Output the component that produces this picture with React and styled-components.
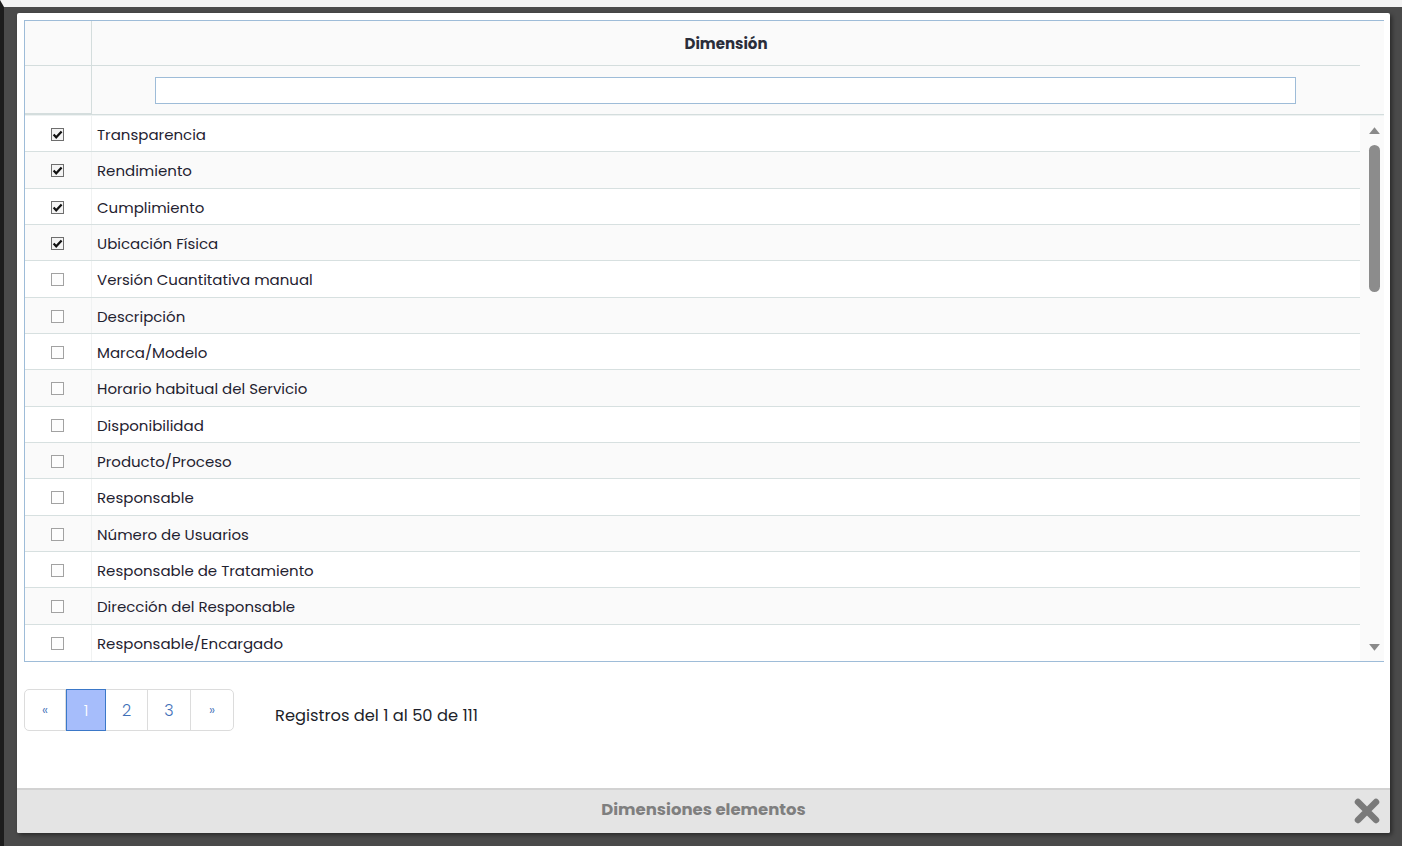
import React, { useState } from 'react'
import styled, { createGlobalStyle } from 'styled-components';

const GlobalStyle = createGlobalStyle`
  html, body { margin: 0; padding: 0; }
  body {
    font-family: "Poppins", "Noto Sans", "Open Sans", sans-serif;
    background: #4a4a4a;
    overflow: hidden;
  }
`;

const dimensiones = [
  { name: 'Transparencia', checked: true },
  { name: 'Rendimiento', checked: true },
  { name: 'Cumplimiento', checked: true },
  { name: 'Ubicación Física', checked: true },
  { name: 'Versión Cuantitativa manual', checked: false },
  { name: 'Descripción', checked: false },
  { name: 'Marca/Modelo', checked: false },
  { name: 'Horario habitual del Servicio', checked: false },
  { name: 'Disponibilidad', checked: false },
  { name: 'Producto/Proceso', checked: false },
  { name: 'Responsable', checked: false },
  { name: 'Número de Usuarios', checked: false },
  { name: 'Responsable de Tratamiento', checked: false },
  { name: 'Dirección del Responsable', checked: false },
  { name: 'Responsable/Encargado', checked: false },
];

export default function App() {
  const [list, setList] = useState(dimensiones);
  const [filtro, setFiltro] = useState('');

  const toggle = (index) => {
    setList(list.map((d, i) => (i === index ? { ...d, checked: !d.checked } : d)));
  };

  const shown = list.filter((d) =>
    d.name.toLowerCase().includes(filtro.toLowerCase().trim())
  );

  return (
    <>
      <GlobalStyle />
      <Page>
        <Dialog>
          <Content>
            <Table>
              <HeadRow>
                <HeadCheckCell />
                <HeadCell>Dimensión</HeadCell>
                <Gutter />
              </HeadRow>
              <FilterRow>
                <HeadCheckCell />
                <FilterCell>
                  <FilterInput value={filtro} onChange={(e) => setFiltro(e.target.value)} />
                </FilterCell>
                <Gutter />
              </FilterRow>
              <Body>
                <Rows>
                  {shown.map((d, i) => (
                    <Row key={d.name} $alt={i % 2 === 1} onClick={() => toggle(list.indexOf(d))}>
                      <CheckCell>
                        <Check $on={d.checked}>
                          {d.checked && (
                            <svg width="11" height="11" viewBox="0 0 11 11">
                              <path d="M1.6 5.6 L4.2 8.3 L9.6 2.4" fill="none" stroke="#111" strokeWidth="2.2" />
                            </svg>
                          )}
                        </Check>
                      </CheckCell>
                      <NameCell>{d.name}</NameCell>
                    </Row>
                  ))}
                </Rows>
                <ScrollTrack>
                  <Arrow viewBox="0 0 14 10"><path d="M1 9 L7 1.5 L13 9 Z" fill="#8a8a8a" /></Arrow>
                  <Thumb />
                  <Spacer />
                  <Arrow viewBox="0 0 14 10"><path d="M1 1 L7 8.5 L13 1 Z" fill="#8a8a8a" /></Arrow>
                </ScrollTrack>
              </Body>
            </Table>

            <PagerBar>
              <Pager>
                <PageItem $w={41} $small>«</PageItem>
                <PageItem $w={40} $active>1</PageItem>
                <PageItem $w={42}>2</PageItem>
                <PageItem $w={43}>3</PageItem>
                <PageItem $w={42} $small $last>»</PageItem>
              </Pager>
              <Records>Registros del 1 al 50 de 111</Records>
            </PagerBar>
          </Content>

          <Footer>
            <FooterTitle>Dimensiones elementos</FooterTitle>
            <CloseButton aria-label="Cerrar">
              <svg width="26" height="26" viewBox="0 0 26 26">
                <path d="M4 4 L22 22 M22 4 L4 22" stroke="#7a7a7a" strokeWidth="6.5" strokeLinecap="round" />
              </svg>
            </CloseButton>
          </Footer>
        </Dialog>
      </Page>
    </>
  )
}

const Page = styled.div`
  width: 1402px;
  height: 846px;
  box-sizing: border-box;
  border-top: 7px solid #f3f3f3;
  border-left: 4px solid #1c1c1c;
  background: #4a4a4a;
  padding: 6px 0 0 13px;
`;

const Dialog = styled.div`
  width: 1373px;
  height: 820px;
  background: #fff;
  border-radius: 2px;
  box-shadow: 2px 2px 4px rgba(0, 0, 0, 0.45);
  display: flex;
  flex-direction: column;
  overflow: hidden;
`;

const Content = styled.div`
  flex: 1;
  padding: 7px 6px 0 7px;
`;

const Table = styled.div`
  border-top: 1px solid #9ebcd8;
  border-left: 1px solid #9ebcd8;
  border-bottom: 1px solid #9ebcd8;
`;

const HeadRow = styled.div`
  display: flex;
  height: 45px;
  background: #fafafa;
`;

const FilterRow = styled(HeadRow)`
  height: 48px;
  border-bottom: 1px solid #d4dddd;
`;

const HeadCheckCell = styled.div`
  width: 66px;
  border-right: 1px solid #d4dddd;
  border-bottom: 1px solid #d4dddd;
`;

const HeadCell = styled.div`
  flex: 1;
  display: flex;
  align-items: center;
  justify-content: center;
  padding-top: 1px;
  font-size: 15px;
  font-weight: 700;
  color: #2a2d3a;
  border-bottom: 1px solid #d4dddd;
`;

const FilterCell = styled.div`
  flex: 1;
  display: flex;
  align-items: center;
  justify-content: center;
  padding-left: 1px;
`;

const FilterInput = styled.input`
  width: 1141px;
  height: 27px;
  box-sizing: border-box;
  border: 1px solid #9ebcd8;
  background: #fff;
  outline: none;
  font: inherit;
  font-size: 14px;
  padding: 0 6px;
  margin-right: 3px;
`;

const Gutter = styled.div`
  width: 24px;
`;

const Body = styled.div`
  display: flex;
  height: 546px;
  box-sizing: border-box;
  border-top: 1px solid #eef2f2;
`;

const Rows = styled.div`
  flex: 1;
  overflow: hidden;
`;

const Row = styled.div`
  display: flex;
  height: 36.33px;
  box-sizing: border-box;
  padding-top: 2px;
  border-bottom: 1px solid #d7e0e0;
  background: ${(p) => (p.$alt ? '#fafafa' : '#fff')};
  cursor: pointer;
  &:last-child { border-bottom: none; }
`;

const CheckCell = styled.div`
  width: 66px;
  margin-top: -2px;
  padding-top: 2px;
  border-right: 1px solid #f0f2f2;
  display: flex;
  align-items: center;
  justify-content: center;
`;

const Check = styled.span`
  width: 13px;
  height: 13px;
  box-sizing: border-box;
  border: 1px solid ${(p) => (p.$on ? '#6e6e6e' : '#a2a2a2')};
  background: ${(p) => (p.$on ? '#f4f4f4' : '#fdfdfd')};
  display: flex;
  align-items: center;
  justify-content: center;
  margin-right: 1px;
`;

const NameCell = styled.div`
  flex: 1;
  display: flex;
  align-items: center;
  padding-left: 5px;
  font-size: 15px;
  color: #1f2230;
`;

const ScrollTrack = styled.div`
  width: 24px;
  background: #fafafa;
  display: flex;
  flex-direction: column;
  align-items: center;
  padding: 10px 0 9px 4px;
  box-sizing: border-box;
`;

const Arrow = styled.svg`
  width: 13px;
  height: 9px;
  flex: none;
`;

const Thumb = styled.div`
  width: 11px;
  height: 147px;
  margin-top: 10px;
  border-radius: 6px;
  background: #8c8c8c;
`;

const Spacer = styled.div`
  flex: 1;
`;

const PagerBar = styled.div`
  display: flex;
  align-items: center;
  margin-top: 27px;
`;

const Pager = styled.div`
  display: flex;
  height: 42px;
  border: 1px solid #dcdcdc;
  border-radius: 5px;
  box-sizing: border-box;
`;

const PageItem = styled.div`
  width: ${(p) => p.$w}px;
  display: flex;
  align-items: center;
  justify-content: center;
  box-sizing: border-box;
  margin: ${(p) => (p.$active ? '-1px 0' : '0')};
  border-right: ${(p) => (p.$last || p.$active ? 'none' : '1px solid #dcdcdc')};
  border: ${(p) => (p.$active ? '1px solid #3b78c8' : undefined)};
  background: ${(p) => (p.$active ? '#a6bdfb' : 'transparent')};
  color: ${(p) => (p.$active ? '#fff' : '#3f70b8')};
  font-size: ${(p) => (p.$small ? '14px' : '16px')};
  font-weight: 300;
  cursor: pointer;
`;

const Records = styled.div`
  margin-left: 41px;
  font-size: 16.3px;
  color: #1d1f2a;
  padding-top: 10px;
`;

const Footer = styled.div`
  height: 45px;
  box-sizing: border-box;
  border-top: 2px solid #d2d2d2;
  padding-bottom: 4px;
  background: #e4e4e4;
  display: flex;
  align-items: center;
  justify-content: center;
  position: relative;
`;

const FooterTitle = styled.div`
  font-size: 16.5px;
  font-weight: 700;
  color: #7f7f7f;
`;

const CloseButton = styled.button`
  position: absolute;
  right: 10px;
  top: 8px;
  border: none;
  background: none;
  padding: 0;
  display: flex;
  cursor: pointer;
`;
